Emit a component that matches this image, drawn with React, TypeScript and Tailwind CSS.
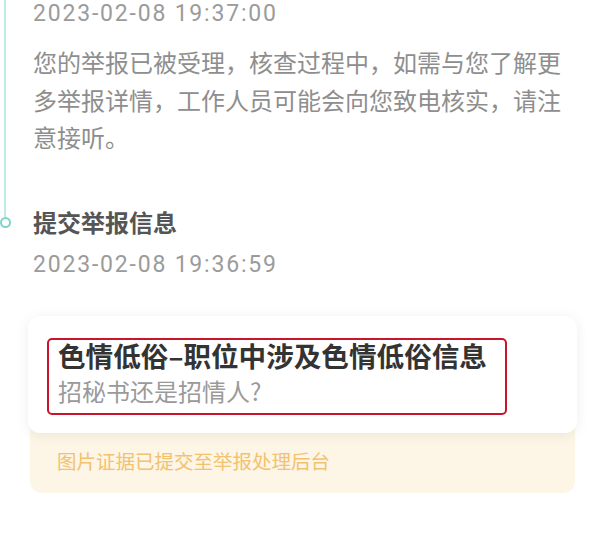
import React from "react";

const cjk = "font-['Noto_Sans_CJK_SC',sans-serif]";

export default function App() {
  return (
    <div className={`w-[600px] h-[540px] overflow-hidden bg-white ${cjk}`}>
      {/* step: accepted */}
      <div className="flex">
        <div className="w-[10px] flex justify-center">
          <div className="w-[2px] bg-[#bfe9e5]" />
        </div>
        <div className="ml-[23px] pb-[50px]">
          <div className="text-[23px] leading-[28px] text-[#9b9b9b] font-['Roboto',sans-serif] tracking-[1.8px]">
            2023-02-08 19:37:00
          </div>
          <p className="mt-[15px] w-[530px] text-[24px] leading-[37.5px] text-[#8e8e8e]">
            您的举报已被受理，核查过程中，如需与您了解更多举报详情，工作人员可能会向您致电核实，请注意接听。
          </p>
        </div>
      </div>

      {/* step: submitted */}
      <div className="flex">
        <div className="w-[10px] flex flex-col items-center">
          <div className="w-[2px] h-[11px] bg-[#bfe9e5]" />
          <div className="w-[11px] h-[11px] rounded-full border-2 border-[#7fd3cc] bg-white" />
        </div>
        <div className="ml-[23px]">
          <div className="text-[24px] leading-[32px] font-bold text-[#555]">提交举报信息</div>
          <div className="mt-[13px] text-[23px] leading-[28px] text-[#9b9b9b] font-['Roboto',sans-serif] tracking-[1.8px]">
            2023-02-08 19:36:59
          </div>
        </div>
      </div>

      {/* report card */}
      <div className="mt-[37px] mx-[28px] w-[549px]">
        <div className="relative z-10 bg-white rounded-[12px] shadow-[0_2px_14px_rgba(0,0,0,0.07)] pt-[22px] pb-[18px] px-[19px]">
          <div className="w-[460px] h-[77px] border-[2.5px] border-[#c9142b] rounded-[5px] px-[9px]">
            <div className="text-[27.6px] leading-[30px] font-bold text-[#333]">色情低俗–职位中涉及色情低俗信息</div>
            <div className="mt-[5px] text-[24px] leading-[32px] text-[#9a9a9a]">招秘书还是招情人?</div>
          </div>
        </div>
        <div className="mx-[2px] -mt-[8px] pt-[24px] pb-[20px] px-[27px] bg-[#fdf5e6] rounded-b-[12px]">
          <div className="text-[19.5px] leading-[24px] text-[#f2c270]">图片证据已提交至举报处理后台</div>
        </div>
      </div>
    </div>
  );
}
